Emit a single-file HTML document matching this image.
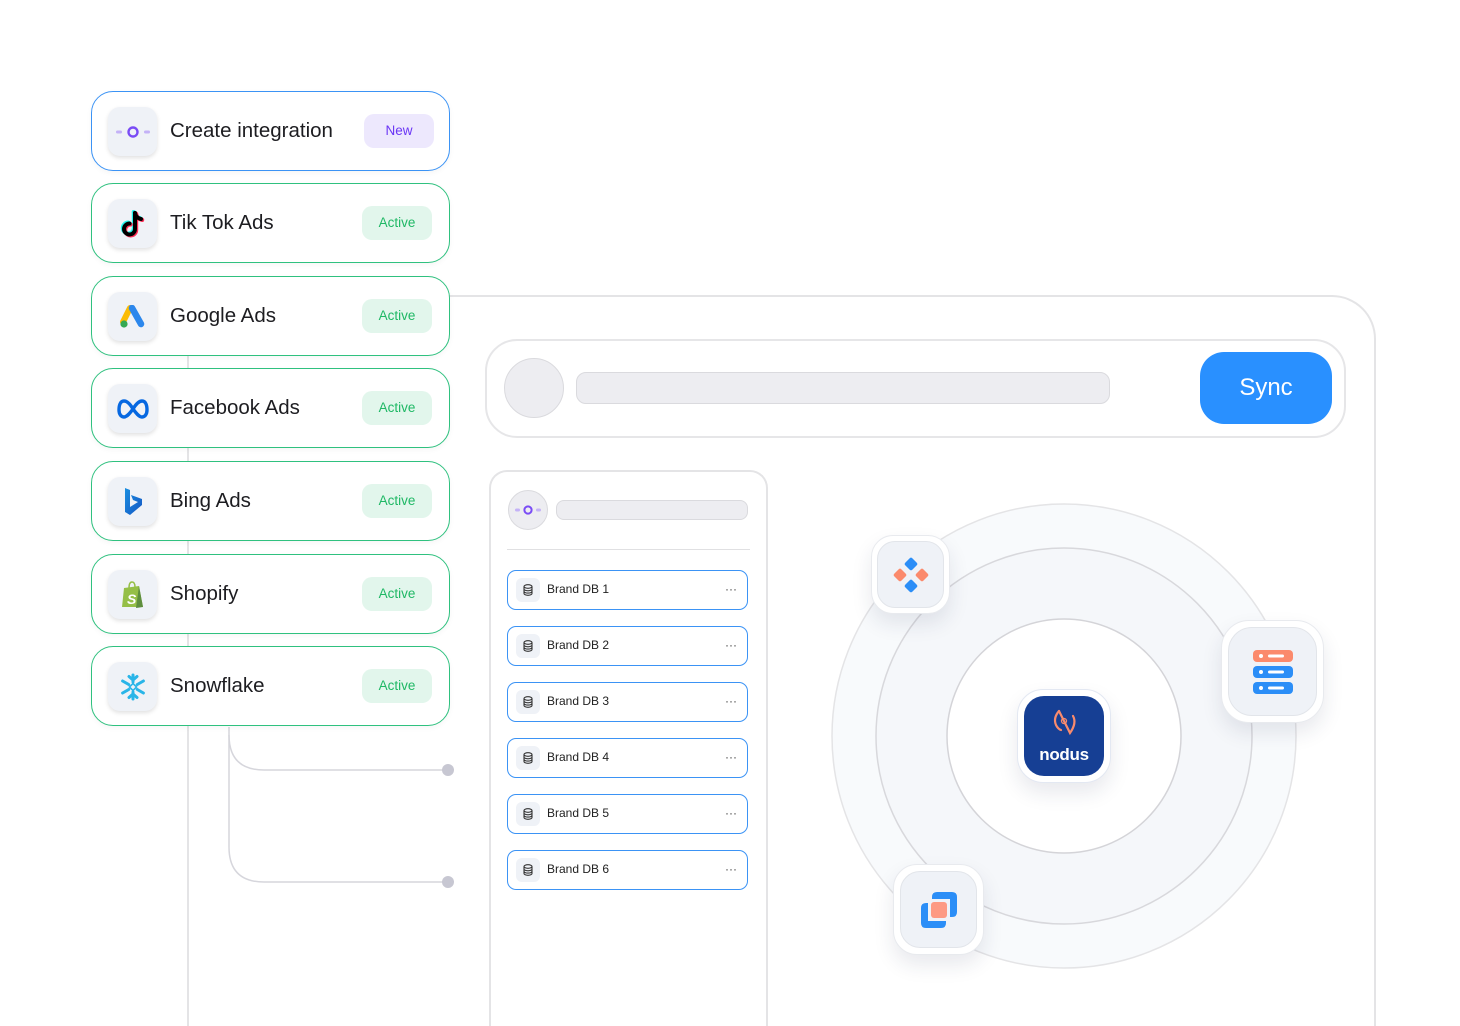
<!DOCTYPE html>
<html><head><meta charset="utf-8">
<style>
*{box-sizing:border-box;margin:0;padding:0}
html{width:1460px;height:1026px;overflow:hidden}
body{width:1460px;height:1026px;background:#fff;position:relative;overflow:hidden;font-family:"Liberation Sans",sans-serif;color:#1b1b1f}
.abs{position:absolute}
.panel{left:187px;top:295px;width:1189px;height:731px;border:2px solid #e4e4e6;border-bottom:none;border-radius:44px 44px 0 0;background:#fff}
.card{position:absolute;left:91px;width:359px;height:80px;border:1.5px solid #2fc17f;border-radius:22px;background:#fff;box-shadow:0 2px 6px rgba(0,0,0,.04)}
.card.blue{border-color:#3b93f5}
.ic{position:absolute;left:16px;top:15px;width:49px;height:49px;border-radius:12px;background:#eff2f7;box-shadow:0 2px 4px rgba(0,0,0,.12);display:flex;align-items:center;justify-content:center}
.lbl{position:absolute;left:78px;top:0;line-height:78px;font-size:20.5px;color:#1d1d21}
.badge{position:absolute;left:270px;top:22px;width:70px;height:34px;border-radius:10px;background:#e2f6ec;color:#1fb865;font-size:13.5px;line-height:34px;text-align:center}
.badge.new{background:#ede8fd;color:#6b36f5}
.row{position:absolute;left:507px;width:241px;height:40px;border:1.5px solid #3b93f5;border-radius:9px;background:#fff}
.row .d{position:absolute;left:8px;top:7px;width:24px;height:24px;border-radius:6px;background:#eff2f7;display:flex;align-items:center;justify-content:center}
.row .t{position:absolute;left:39px;top:0;line-height:37px;font-size:12px;color:#222}
.row .m{position:absolute;right:10px;top:0;line-height:37px;font-size:12px;color:#444}
.orb{position:absolute;border-radius:22px;background:#fff;border:1.5px solid #e8eaee;box-shadow:0 10px 20px rgba(30,40,80,.10);display:flex;align-items:center;justify-content:center}
.orb .in{border-radius:18px;background:#eff2f7;display:flex;align-items:center;justify-content:center;border:1px solid #e2e5ea}
</style></head><body>

<div class="abs panel"></div>

<svg class="abs" style="left:0;top:0" width="1460" height="1026">
<path d="M229 727 V735 Q229 770 264 770 H448" fill="none" stroke="#d6d6dc" stroke-width="1.5"/>
<path d="M229 735 V847 Q229 882 264 882 H448" fill="none" stroke="#d6d6dc" stroke-width="1.5"/>
<circle cx="448" cy="770" r="6" fill="#c7c7d2"/>
<circle cx="448" cy="882" r="6" fill="#c7c7d2"/>
<circle cx="1064" cy="736" r="232" fill="#f8fafc" stroke="#e4e4e6" stroke-width="1.5"/>
<circle cx="1064" cy="736" r="188" fill="#f5f7fa" stroke="#d8d8dc" stroke-width="1.5"/>
<circle cx="1064" cy="736" r="117" fill="#fff" stroke="#d4d4d8" stroke-width="1.5"/>
</svg>

<div class="abs" style="left:485px;top:339px;width:861px;height:99px;border:2px solid #e6e6e8;border-radius:32px;background:#fff"></div>
<div class="abs" style="left:504px;top:358px;width:60px;height:60px;border-radius:50%;background:#ededf1;border:1px solid #dadade"></div>
<div class="abs" style="left:576px;top:372px;width:534px;height:32px;border-radius:10px;background:#ededf1;border:1px solid #dadade"></div>
<div class="abs" style="left:1200px;top:352px;width:132px;height:72px;border-radius:24px;background:#2990ff;color:#fff;font-size:24px;line-height:72px;text-align:center">Sync</div>

<div class="abs" style="left:489px;top:470px;width:279px;height:556px;border:2px solid #e4e4e6;border-bottom:none;border-radius:18px 18px 0 0;background:#fff"></div>
<div class="abs" style="left:508px;top:490px;width:40px;height:40px;border-radius:50%;background:#ededf1;border:1px solid #dadade;display:flex;align-items:center;justify-content:center">
<svg width="26" height="12" viewBox="0 0 26 12"><rect x="0" y="4.5" width="5" height="3" rx="1.5" fill="#c4b2f7"/><rect x="21" y="4.5" width="5" height="3" rx="1.5" fill="#c4b2f7"/><circle cx="13" cy="6" r="3.6" fill="none" stroke="#7a4cf5" stroke-width="2"/></svg></div>
<div class="abs" style="left:556px;top:500px;width:192px;height:20px;border-radius:8px;background:#ededf1;border:1px solid #dadade"></div>
<div class="abs" style="left:507px;top:549px;width:243px;height:1px;background:#e0e0e2"></div>

<div class="row" style="top:570px"><div class="d"><svg width="10" height="12" viewBox="0 0 10 12"><ellipse cx="5" cy="2.5" rx="4" ry="1.8" fill="none" stroke="#333" stroke-width="1.1"/><path d="M1 2.5V9.5c0 1 1.8 1.8 4 1.8s4-.8 4-1.8V2.5M1 5c0 1 1.8 1.8 4 1.8S9 6 9 5M1 7.3c0 1 1.8 1.8 4 1.8S9 8.3 9 7.3" fill="none" stroke="#333" stroke-width="1.1"/></svg></div><div class="t">Brand DB 1</div><div class="m">···</div></div>
<div class="row" style="top:626px"><div class="d"><svg width="10" height="12" viewBox="0 0 10 12"><ellipse cx="5" cy="2.5" rx="4" ry="1.8" fill="none" stroke="#333" stroke-width="1.1"/><path d="M1 2.5V9.5c0 1 1.8 1.8 4 1.8s4-.8 4-1.8V2.5M1 5c0 1 1.8 1.8 4 1.8S9 6 9 5M1 7.3c0 1 1.8 1.8 4 1.8S9 8.3 9 7.3" fill="none" stroke="#333" stroke-width="1.1"/></svg></div><div class="t">Brand DB 2</div><div class="m">···</div></div>
<div class="row" style="top:682px"><div class="d"><svg width="10" height="12" viewBox="0 0 10 12"><ellipse cx="5" cy="2.5" rx="4" ry="1.8" fill="none" stroke="#333" stroke-width="1.1"/><path d="M1 2.5V9.5c0 1 1.8 1.8 4 1.8s4-.8 4-1.8V2.5M1 5c0 1 1.8 1.8 4 1.8S9 6 9 5M1 7.3c0 1 1.8 1.8 4 1.8S9 8.3 9 7.3" fill="none" stroke="#333" stroke-width="1.1"/></svg></div><div class="t">Brand DB 3</div><div class="m">···</div></div>
<div class="row" style="top:738px"><div class="d"><svg width="10" height="12" viewBox="0 0 10 12"><ellipse cx="5" cy="2.5" rx="4" ry="1.8" fill="none" stroke="#333" stroke-width="1.1"/><path d="M1 2.5V9.5c0 1 1.8 1.8 4 1.8s4-.8 4-1.8V2.5M1 5c0 1 1.8 1.8 4 1.8S9 6 9 5M1 7.3c0 1 1.8 1.8 4 1.8S9 8.3 9 7.3" fill="none" stroke="#333" stroke-width="1.1"/></svg></div><div class="t">Brand DB 4</div><div class="m">···</div></div>
<div class="row" style="top:794px"><div class="d"><svg width="10" height="12" viewBox="0 0 10 12"><ellipse cx="5" cy="2.5" rx="4" ry="1.8" fill="none" stroke="#333" stroke-width="1.1"/><path d="M1 2.5V9.5c0 1 1.8 1.8 4 1.8s4-.8 4-1.8V2.5M1 5c0 1 1.8 1.8 4 1.8S9 6 9 5M1 7.3c0 1 1.8 1.8 4 1.8S9 8.3 9 7.3" fill="none" stroke="#333" stroke-width="1.1"/></svg></div><div class="t">Brand DB 5</div><div class="m">···</div></div>
<div class="row" style="top:850px"><div class="d"><svg width="10" height="12" viewBox="0 0 10 12"><ellipse cx="5" cy="2.5" rx="4" ry="1.8" fill="none" stroke="#333" stroke-width="1.1"/><path d="M1 2.5V9.5c0 1 1.8 1.8 4 1.8s4-.8 4-1.8V2.5M1 5c0 1 1.8 1.8 4 1.8S9 6 9 5M1 7.3c0 1 1.8 1.8 4 1.8S9 8.3 9 7.3" fill="none" stroke="#333" stroke-width="1.1"/></svg></div><div class="t">Brand DB 6</div><div class="m">···</div></div>

<div class="orb" style="left:871px;top:535px;width:79px;height:79px"><div class="in" style="width:67px;height:67px">
<svg width="36" height="36" viewBox="0 0 36 36"><rect x="13" y="2" width="10" height="10" rx="2" transform="rotate(45 18 7)" fill="#2b8ef7"/><rect x="13" y="24" width="10" height="10" rx="2" transform="rotate(45 18 29)" fill="#2b8ef7"/><rect x="2" y="13" width="10" height="10" rx="2" transform="rotate(45 7 18)" fill="#fb8a6c"/><rect x="24" y="13" width="10" height="10" rx="2" transform="rotate(45 29 18)" fill="#fb8a6c"/></svg></div></div>

<div class="orb" style="left:1221px;top:620px;width:103px;height:103px;border-radius:28px"><div class="in" style="width:89px;height:89px;border-radius:24px">
<svg width="40" height="44" viewBox="0 0 40 44"><rect x="0" y="0" width="40" height="12" rx="4" fill="#fb8a6c"/><rect x="0" y="16" width="40" height="12" rx="4" fill="#2b8ef7"/><rect x="0" y="32" width="40" height="12" rx="4" fill="#2b8ef7"/><circle cx="8" cy="6" r="2" fill="#fff"/><rect x="15" y="4.5" width="16" height="3" rx="1.5" fill="#fff"/><circle cx="8" cy="22" r="2" fill="#fff"/><rect x="15" y="20.5" width="16" height="3" rx="1.5" fill="#fff"/><circle cx="8" cy="38" r="2" fill="#fff"/><rect x="15" y="36.5" width="16" height="3" rx="1.5" fill="#fff"/></svg></div></div>

<div class="orb" style="left:893px;top:864px;width:91px;height:91px;border-radius:24px"><div class="in" style="width:77px;height:77px;border-radius:20px">
<svg width="38" height="38" viewBox="0 0 38 38"><path d="M12 6 Q12 1 17 1 H32 Q37 1 37 6 V21 Q37 26 32 26 H30 V8 H12Z" fill="#2b8ef7"/><path d="M1 17 Q1 12 6 12 H8 V30 H26 V32 Q26 37 21 37 H6 Q1 37 1 32Z" fill="#2b8ef7"/><rect x="11" y="11" width="16" height="16" rx="3" fill="#fd9a83"/></svg></div></div>

<div class="orb" style="left:1017px;top:689px;width:94px;height:94px;border-radius:26px;border-color:#e3e8f2"><div style="width:80px;height:80px;border-radius:20px;background:#163f94;position:relative">
<svg class="abs" style="left:26px;top:12px" width="30" height="30" viewBox="0 0 30 30"><path d="M9 3 Q3 10 6 17 Q8 21 11 22" fill="none" stroke="#f98b6d" stroke-width="2.2" stroke-linecap="round"/><path d="M9 3 L20 25 Q27 15 23 8" fill="none" stroke="#f98b6d" stroke-width="2.2" stroke-linecap="round"/><circle cx="14" cy="13" r="2.5" fill="none" stroke="#f98b6d" stroke-width="1.3"/></svg>
<div class="abs" style="left:0;top:49px;width:80px;text-align:center;color:#fff;font-weight:bold;font-size:17px;letter-spacing:-.3px">nodus</div></div></div>

<div class="card blue" style="top:91px"><div class="ic"><svg width="34" height="12" viewBox="0 0 34 12"><rect x="0" y="4.5" width="6" height="3" rx="1.5" fill="#c4b2f7"/><rect x="28" y="4.5" width="6" height="3" rx="1.5" fill="#c4b2f7"/><circle cx="17" cy="6" r="4.5" fill="none" stroke="#7a4cf5" stroke-width="2.4"/></svg></div><div class="lbl">Create integration</div><div class="badge new" style="left:272px">New</div></div>

<div class="card" style="top:183px"><div class="ic"><svg width="26" height="28" viewBox="0 0 26 28"><g fill="none" stroke-width="4" stroke-linecap="round"><path d="M15 3 V19 A5.5 5.5 0 1 1 9.5 13.5" stroke="#25f4ee" transform="translate(-1.2 -1)"/><path d="M15 3 Q16 8 21 9" stroke="#25f4ee" transform="translate(-1.2 -1)"/><path d="M15 3 V19 A5.5 5.5 0 1 1 9.5 13.5" stroke="#fe2c55" transform="translate(1.2 1)"/><path d="M15 3 Q16 8 21 9" stroke="#fe2c55" transform="translate(1.2 1)"/><path d="M15 3 V19 A5.5 5.5 0 1 1 9.5 13.5" stroke="#000"/><path d="M15 3 Q16 8 21 9" stroke="#000"/></g></svg></div><div class="lbl">Tik Tok Ads</div><div class="badge">Active</div></div>

<div class="card" style="top:276px"><div class="ic"><svg width="28" height="24" viewBox="0 0 28 24"><path d="M11 3 L4 17" stroke="#fbbc04" stroke-width="6" stroke-linecap="round"/><path d="M13 3 L22 19" stroke="#2c87ec" stroke-width="6.5" stroke-linecap="round"/><circle cx="5" cy="19" r="3.6" fill="#34a853"/></svg></div><div class="lbl">Google Ads</div><div class="badge">Active</div></div>

<div class="card" style="top:368px"><div class="ic"><svg width="32" height="20" viewBox="0 0 32 20"><path d="M16 10 C12 3 9 2 7 2 C3 2 2 7 2 11 C2 15 4 18 7 18 C10 18 13 14 16 10 C19 5 22 2 25 2 C29 2 30 7 30 11 C30 15 28 18 25 18 C22 18 19 14 16 10Z" fill="none" stroke="#0668e1" stroke-width="3.4"/></svg></div><div class="lbl">Facebook Ads</div><div class="badge">Active</div></div>

<div class="card" style="top:461px"><div class="ic"><svg width="24" height="30" viewBox="0 0 24 30"><defs><linearGradient id="bg" x1="0" y1="0" x2="1" y2="1"><stop offset="0" stop-color="#1b8fe0"/><stop offset="1" stop-color="#1457c4"/></linearGradient></defs><path d="M4 1 L9 3 V20 L17 15 L12 13 L10 8 L21 12 V18 L9 28 L4 25Z" fill="url(#bg)"/></svg></div><div class="lbl">Bing Ads</div><div class="badge">Active</div></div>

<div class="card" style="top:554px"><div class="ic"><svg width="26" height="28" viewBox="0 0 26 28"><path d="M4 7 L19 5 L23 26 L2 26Z" fill="#95bf47"/><path d="M19 5 L23 26 L16 27Z" fill="#5e8e3e"/><path d="M9 7 Q9 1 12 1 Q15 1 15 6" fill="none" stroke="#95bf47" stroke-width="1.5"/><text x="7" y="23" font-family="Liberation Sans" font-weight="bold" font-style="italic" font-size="14" fill="#fff">S</text></svg></div><div class="lbl">Shopify</div><div class="badge">Active</div></div>

<div class="card" style="top:646px"><div class="ic"><svg width="28" height="28" viewBox="0 0 28 28"><g stroke="#29b5e8" stroke-width="3" stroke-linecap="round" fill="none"><path d="M14 2 V9 M14 19 V26 M3.6 8 L9.7 11.5 M18.3 16.5 L24.4 20 M3.6 20 L9.7 16.5 M18.3 11.5 L24.4 8"/><path d="M10 3.5 L14 7 L18 3.5 M10 24.5 L14 21 L18 24.5"/></g><rect x="11.5" y="11.5" width="5" height="5" transform="rotate(45 14 14)" fill="none" stroke="#29b5e8" stroke-width="1.6"/></svg></div><div class="lbl">Snowflake</div><div class="badge">Active</div></div>

</body></html>
